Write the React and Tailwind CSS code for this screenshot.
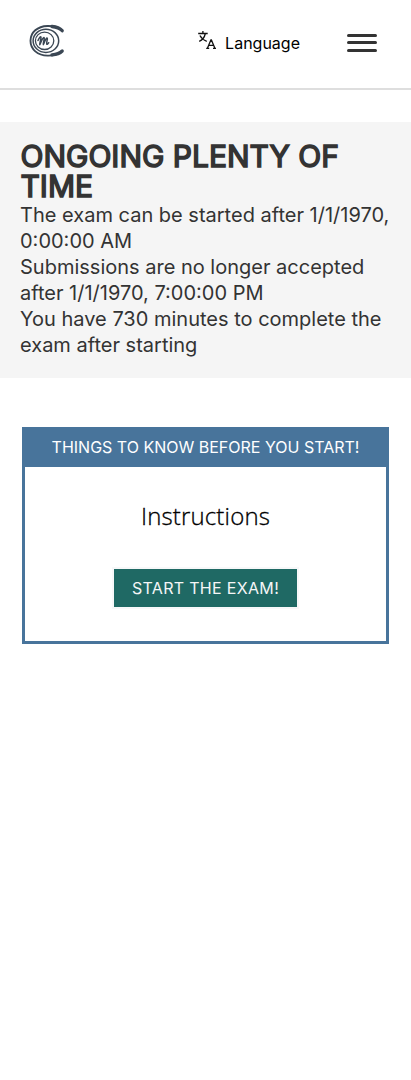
function Logo() {
  return (
    <svg width="36" height="34" viewBox="0 0 36 34" fill="none" stroke="#3b4754" strokeLinecap="round" aria-label="Home">
      <path d="M33 6.600C30 3.300 24.500 1.900 18.500 2 8.400 2.300 1.500 8.300 1.500 16.800S8.600 31.500 18.600 31.600c6 .1 11.400-1.400 14.400-4.500" strokeWidth="1.900" />
      <path d="M33.200 6.700C31.200 4.600 27.500 3 23 2.500M33.200 27c-2.200 2.200-5.800 3.500-10.200 3.900" strokeWidth="3.300" />
      <ellipse cx="16.900" cy="16.800" rx="12.800" ry="11.600" strokeWidth="1.500" />
      <ellipse cx="15.600" cy="16.800" rx="9.200" ry="8.700" strokeWidth="1.300" />
      <path d="M9 16.500c1.300-3 2.800-4.500 3-3.200.2 1.700-1.700 7-1.300 7.400.4.300 2.500-7 4.200-7.100 1.200 0-1.200 6.700-.7 7 .5.300 2.300-6.600 3.800-6.700 1.200.1-1 5.500-.3 6.300.5.500 1.500-.5 2-1.500" strokeWidth="1.500" />
    </svg>
  );
}

function TranslateIcon() {
  return (
    <svg width="18" height="20" viewBox="0 0 18 20" fill="none" stroke="#111" strokeWidth="1.300">
      <path d="M.2 3.500h9.500M4.900 1v2.500M1.900 5.500c1.600 3 3.600 4.700 6.900 5.800M7.200 4C6.500 7.200 4.600 10 1.200 11.400" />
      <path d="M9.400 18.300 12.900 10h.5l3.500 8.300M10.700 15.400h4.900M8.200 18.400h3M15 18.400h3" />
    </svg>
  );
}

export default function App() {
  return (
    <div className="min-h-[1080px] bg-white font-['Inter',sans-serif]">
      <header className="flex h-[90px] items-start border-b-2 border-[#dedede] pl-[29px] pr-[34px]">
        <a href="#" className="mt-6"><Logo /></a>
        <button className="ml-auto mt-[30px] flex items-start text-black">
          <TranslateIcon />
          <span className="ml-[9px] mt-px text-base leading-6">Language</span>
        </button>
        <button aria-label="Menu" className="ml-[47px] mt-[34px] flex w-[30px] flex-col">
          <span className="h-[3px] w-full rounded-xs bg-[#333]" />
          <span className="mt-1 h-[3px] w-full rounded-xs bg-[#333]" />
          <span className="mt-[5px] h-[3px] w-full rounded-xs bg-[#333]" />
        </button>
      </header>
      <main>
        <section className="mt-8 h-64 bg-[#f5f5f5] px-5 pt-5 text-[#333]">
          <h1 className="-mt-px mb-px pl-[0.5px] text-[30px] font-normal uppercase leading-[30px] [-webkit-text-stroke:1.5px_#333]">Ongoing plenty of time</h1>
          <div className="text-xl leading-[26px]">
            <p>The exam can be started after 1/1/1970, 0:00:00 AM</p>
            <p>Submissions are no longer accepted after 1/1/1970, 7:00:00 PM</p>
            <p>You have 730 minutes to complete the exam after starting</p>
          </div>
        </section>
        <section className="mx-[22px] mt-[49px] flex h-[217px] flex-col items-center border-[3px] border-t-0 border-[#48749b]">
          <h2 className="h-10 self-stretch bg-[#48749b] text-center text-base uppercase leading-10 text-white">Things to know before you start!</h2>
          <p className="mt-[31px] mb-px font-['Open_Sans',sans-serif] text-2xl font-light leading-9 tracking-[0.16px] text-black [-webkit-text-stroke:0.3px_black]">Instructions</p>
          <button className="mt-8 h-[42px] w-[187px] border-2 border-[#f7f8f9] bg-[#1f6964] text-base uppercase leading-[38px] tracking-[0.32px] text-[#f5f6f7]">Start the exam!</button>
        </section>
      </main>
    </div>
  );
}
